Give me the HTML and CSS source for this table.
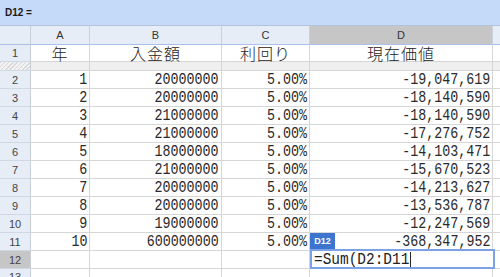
FILE: index.html
```html
<!DOCTYPE html>
<html>
<head>
<meta charset="utf-8">
<link rel="stylesheet" href="styles.css">
</head>
<body>
<div class="app">
  <div class="formula-bar"><span class="ref">D12 =</span></div>
  <div class="sheet">
    <div class="grid">
      <div class="corner"></div>
      <div class="colh">A</div>
      <div class="colh">B</div>
      <div class="colh">C</div>
      <div class="colh sel">D</div>
      <div class="colh"></div>

      <div class="rowh">1</div>
      <div class="cell title">年</div>
      <div class="cell title">入金額</div>
      <div class="cell title">利回り</div>
      <div class="cell title">現在価値</div>
      <div class="cell"></div>

      <div class="rowh band hatch"></div>
      <div class="cell band"></div>
      <div class="cell band"></div>
      <div class="cell band"></div>
      <div class="cell band"></div>
      <div class="cell band"></div>

      <div class="rowh">2</div><div class="cell num"><span>1</span></div><div class="cell num"><span>20000000</span></div><div class="cell num"><span>5.00%</span></div><div class="cell num"><span>-19,047,619</span></div><div class="cell"></div>
      <div class="rowh">3</div><div class="cell num"><span>2</span></div><div class="cell num"><span>20000000</span></div><div class="cell num"><span>5.00%</span></div><div class="cell num"><span>-18,140,590</span></div><div class="cell"></div>
      <div class="rowh">4</div><div class="cell num"><span>3</span></div><div class="cell num"><span>21000000</span></div><div class="cell num"><span>5.00%</span></div><div class="cell num"><span>-18,140,590</span></div><div class="cell"></div>
      <div class="rowh">5</div><div class="cell num"><span>4</span></div><div class="cell num"><span>21000000</span></div><div class="cell num"><span>5.00%</span></div><div class="cell num"><span>-17,276,752</span></div><div class="cell"></div>
      <div class="rowh">6</div><div class="cell num"><span>5</span></div><div class="cell num"><span>18000000</span></div><div class="cell num"><span>5.00%</span></div><div class="cell num"><span>-14,103,471</span></div><div class="cell"></div>
      <div class="rowh">7</div><div class="cell num"><span>6</span></div><div class="cell num"><span>21000000</span></div><div class="cell num"><span>5.00%</span></div><div class="cell num"><span>-15,670,523</span></div><div class="cell"></div>
      <div class="rowh">8</div><div class="cell num"><span>7</span></div><div class="cell num"><span>20000000</span></div><div class="cell num"><span>5.00%</span></div><div class="cell num"><span>-14,213,627</span></div><div class="cell"></div>
      <div class="rowh">9</div><div class="cell num"><span>8</span></div><div class="cell num"><span>20000000</span></div><div class="cell num"><span>5.00%</span></div><div class="cell num"><span>-13,536,787</span></div><div class="cell"></div>
      <div class="rowh">10</div><div class="cell num"><span>9</span></div><div class="cell num"><span>19000000</span></div><div class="cell num"><span>5.00%</span></div><div class="cell num"><span>-12,247,569</span></div><div class="cell"></div>
      <div class="rowh">11</div><div class="cell num"><span>10</span></div><div class="cell num"><span>600000000</span></div><div class="cell num"><span>5.00%</span></div><div class="cell num"><span>-368,347,952</span></div><div class="cell"></div>
      <div class="rowh sel">12</div><div class="cell"></div><div class="cell"></div><div class="cell"></div><div class="cell"></div><div class="cell"></div>
      <div class="rowh last">13</div><div class="cell"></div><div class="cell"></div><div class="cell"></div><div class="cell"></div><div class="cell"></div>
    </div>
    <div class="cell-tag">D12</div>
    <div class="editor"><span class="etext">=Sum(D2:D11</span></div>
  </div>
</div>
</body>
</html>
```

FILE: styles.css
```css
html, body {
  margin: 0;
  padding: 0;
  background: #ffffff;
}
.app {
  width: 500px;
  height: 277px;
  overflow: hidden;
  font-family: "Liberation Sans", Arial, sans-serif;
}
.formula-bar {
  height: 26px;
  box-sizing: border-box;
  background: #c5d9f8;
  border-bottom: 1px solid #b4c3d8;
  display: flex;
  align-items: center;
  padding-left: 5px;
}
.ref {
  font-size: 10px;
  font-weight: bold;
  color: #1a1a1a;
}
.sheet {
  position: relative;
  height: 251px;
  overflow: hidden;
}
.grid {
  display: grid;
  grid-template-columns: 31px 59px 132px 88px 183px 30px;
  grid-template-rows: 19px 17px 9px repeat(12, 18px);
}
.grid > div {
  box-sizing: border-box;
  border-right: 1px solid #d6d6d6;
  border-bottom: 1px solid #d6d6d6;
  overflow: hidden;
  white-space: nowrap;
}
.grid > .title,
.grid > .num {
  overflow: visible;
}
.corner {
  background: #e6edf7;
  border-bottom: 1px solid #a9c1e8 !important;
  border-right: 1px solid #c7ced8 !important;
}
.colh {
  background: #e6edf7;
  border-right: 1px solid #c9d1dd !important;
  border-bottom: 1px solid #a9c1e8 !important;
  font-size: 11px;
  color: #333;
  text-align: center;
  line-height: 18px;
}
.colh.sel {
  background: #c6c6c6;
}
.rowh {
  background: #e6edf7;
  border-right: 1px solid #c7ced8 !important;
  border-bottom: 1px solid #d0d8e4 !important;
  font-size: 11px;
  color: #444;
  text-align: center;
  display: flex;
  align-items: center;
  justify-content: center;
}
.rowh.last {
  align-items: flex-start;
  padding-top: 2px;
}
.rowh.sel {
  background: #c6c6c6;
}
.band {
  background: #efefef;
}
.hatch {
  background: repeating-linear-gradient(135deg, #d8d8d8 0 1px, #f2f2f2 1px 3px);
}
.cell {
  color: #333;
}
.title {
  font-family: "Noto Sans CJK JP", "Noto Sans CJK SC", sans-serif;
  font-size: 16px;
  font-weight: 300;
  color: #222;
  text-align: center;
  line-height: 16px;
  letter-spacing: 1px;
}
.num {
  display: flex;
  align-items: center;
  justify-content: flex-end;
  padding-right: 2px;
}
.num span {
  display: inline-block;
  font-family: "Liberation Mono", monospace;
  font-size: 17px;
  line-height: 15px;
  color: #2a2a2a;
  transform: scaleX(0.785);
  transform-origin: right center;
}
.cell-tag {
  position: absolute;
  left: 310px;
  top: 207px;
  width: 25px;
  height: 16px;
  background: #3d74cf;
  color: #ffffff;
  font-size: 9px;
  font-weight: bold;
  display: flex;
  align-items: center;
  justify-content: center;
}
.editor {
  position: absolute;
  left: 310px;
  top: 223px;
  width: 185px;
  height: 20px;
  box-sizing: border-box;
  border: 2px solid #7ba2e6;
  background: #ffffff;
  display: flex;
  align-items: center;
  padding-left: 2px;
}
.etext {
  display: inline-block;
  font-family: "Liberation Mono", monospace;
  font-size: 17px;
  line-height: 15px;
  color: #222;
  transform: scaleX(0.85);
  transform-origin: left center;
  border-right: 1px solid #000;
  padding-right: 1px;
}
```
